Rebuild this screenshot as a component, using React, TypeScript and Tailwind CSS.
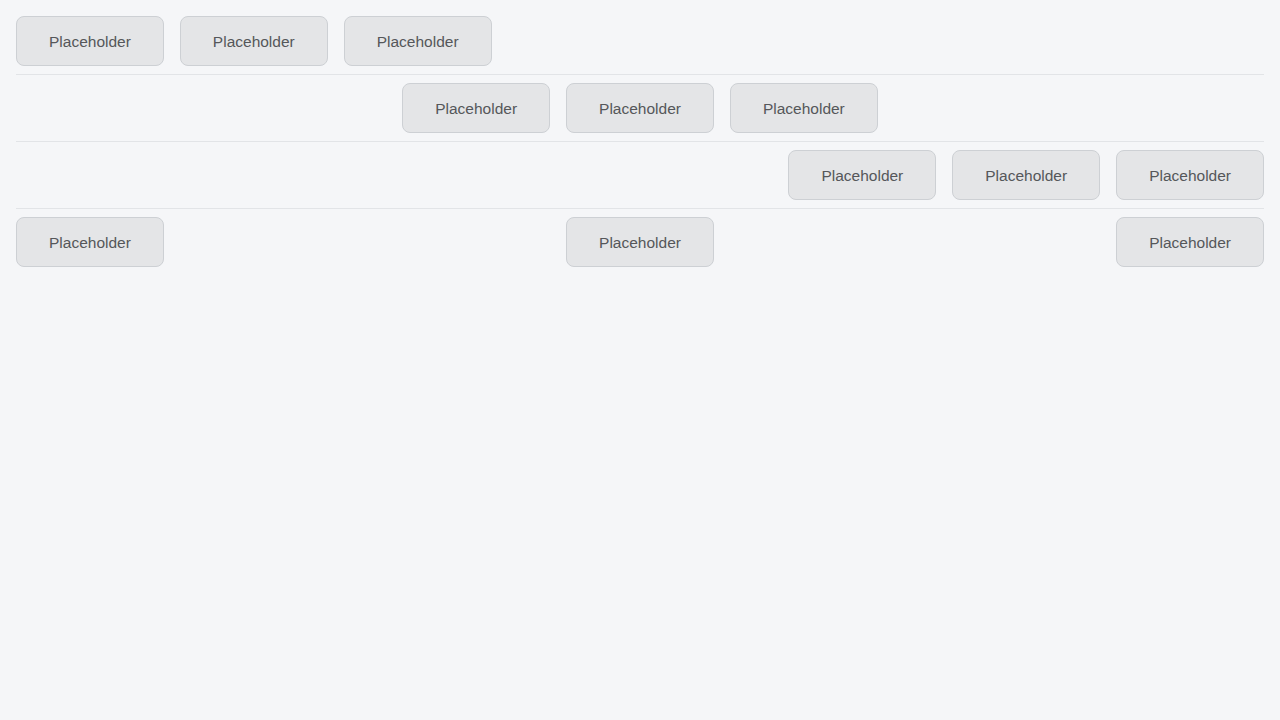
const rows: Array<{ justify: string; count: number }> = [
  { justify: 'justify-start', count: 3 },
  { justify: 'justify-center', count: 3 },
  { justify: 'justify-end', count: 3 },
  { justify: 'justify-between', count: 3 },
];

function PlaceholderButton() {
  return (
    <button className="flex h-[50px] shrink-0 items-center justify-center rounded-lg border border-[#cdd0d4] bg-[#e4e5e7] px-8 pt-0.5 text-[15.5px] text-[#55575a]">
      Placeholder
    </button>
  );
}

export default function App() {
  return (
    <div className="min-h-[720px] bg-[#f5f6f8] px-4 py-2 font-['Liberation_Sans',Arial,sans-serif]">
      {rows.map(({ justify, count }, i) => (
        <div
          key={i}
          className={`flex gap-4 py-2 ${justify} ${i < rows.length - 1 ? 'border-b border-[#e2e4e7]' : ''}`}
        >
          {Array.from({ length: count }).map((_, j) => (
            <PlaceholderButton key={j} />
          ))}
        </div>
      ))}
    </div>
  );
}
